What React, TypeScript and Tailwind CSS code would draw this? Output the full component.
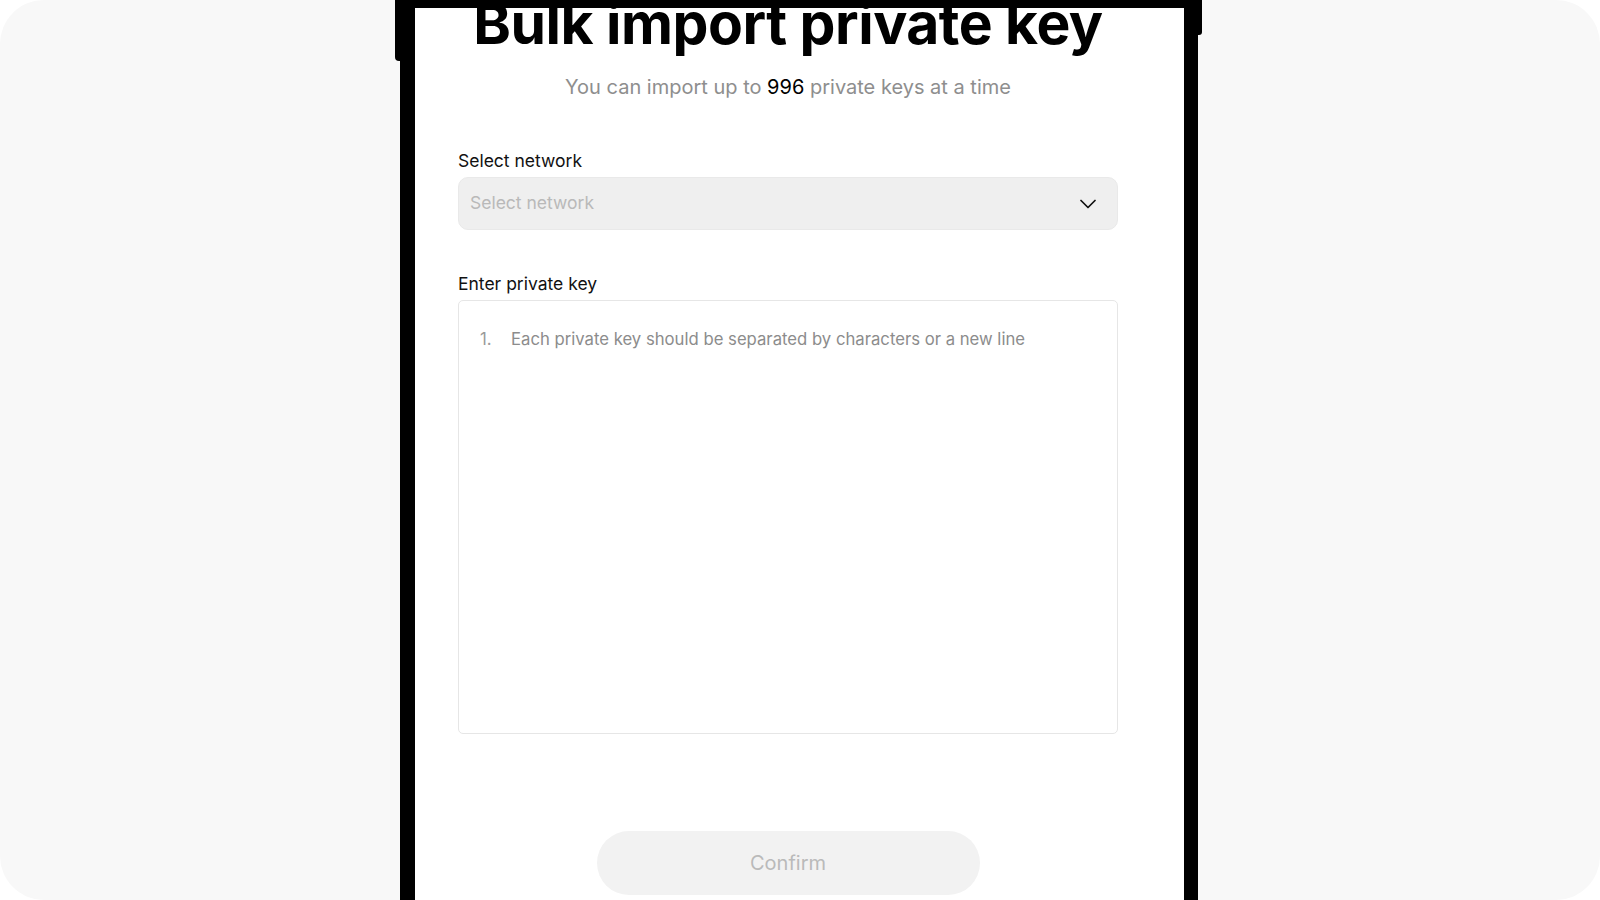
import React from 'react'

const ChevronDown = () => (
  <svg width="16" height="10" viewBox="0 0 16 10" fill="none">
    <path d="M1 1.5L8 8.5L15 1.5" stroke="#111" strokeWidth="1.7" strokeLinecap="round" strokeLinejoin="round" />
  </svg>
)

export default function App() {
  return (
    <div className="h-screen w-full bg-white" style={{ fontFamily: 'Inter, "Liberation Sans", sans-serif' }}>
      <div className="h-[900px] w-full bg-[#f8f8f8] rounded-[44px] flex overflow-hidden">
        {/* phone frame */}
        <div className="relative ml-[400px] w-[798px] h-[900px]">
          {/* top shelf of the frame */}
          <div className="absolute -left-[5px] top-0 w-[8px] h-[61px] bg-black rounded-bl-[4px]" />
          <div className="absolute -right-[4px] top-0 w-[8px] h-[35px] bg-black rounded-br-[3px]" />

          <div className="relative h-full border-l-[15px] border-r-[14px] border-t-[8px] border-black bg-white overflow-hidden">
            <div className="flex flex-col pl-[43px] pr-[66px]">
              <h1 className="-mt-[11px] h-[53px] text-[57px] leading-[53px] font-bold text-black text-center tracking-[-0.5px] whitespace-nowrap">
                Bulk import private key
              </h1>
              <p className="mt-[23px] text-[20px] leading-[28px] text-[#8e8e8e] text-center">
                You can import up to <span className="text-black">996</span> private keys at a time
              </p>

              <label className="mt-[48px] text-[17.5px] leading-[24px] text-[#111]">Select network</label>
              <button className="mt-[4px] h-[53px] w-full flex items-center justify-between pl-[11px] pr-[21px] bg-[#efefef] border border-[#e9e9e9] rounded-[10px]">
                <span className="text-[17.5px] text-[#b9b9b9]">Select network</span>
                <ChevronDown />
              </button>

              <label className="mt-[42px] text-[17.5px] leading-[24px] text-[#111]">Enter private key</label>
              <div className="mt-[4px] h-[434px] w-full bg-white border border-[#e6e6e6] rounded-[5px] pt-[26px] pl-[21px] pr-[20px]">
                <div className="flex text-[16.7px] leading-[24px]">
                  <span className="w-[31px] text-[#9a9a9a]">1.</span>
                  <span className="text-[#8c8c8c]">Each private key should be separated by characters or a new line</span>
                </div>
              </div>

              <div className="mt-[97px] flex justify-center">
                <button className="h-[64px] w-[383px] rounded-full bg-[#f2f2f2] text-[20px] text-[#bababa]">
                  Confirm
                </button>
              </div>
            </div>
          </div>
        </div>
      </div>
    </div>
  )
}
